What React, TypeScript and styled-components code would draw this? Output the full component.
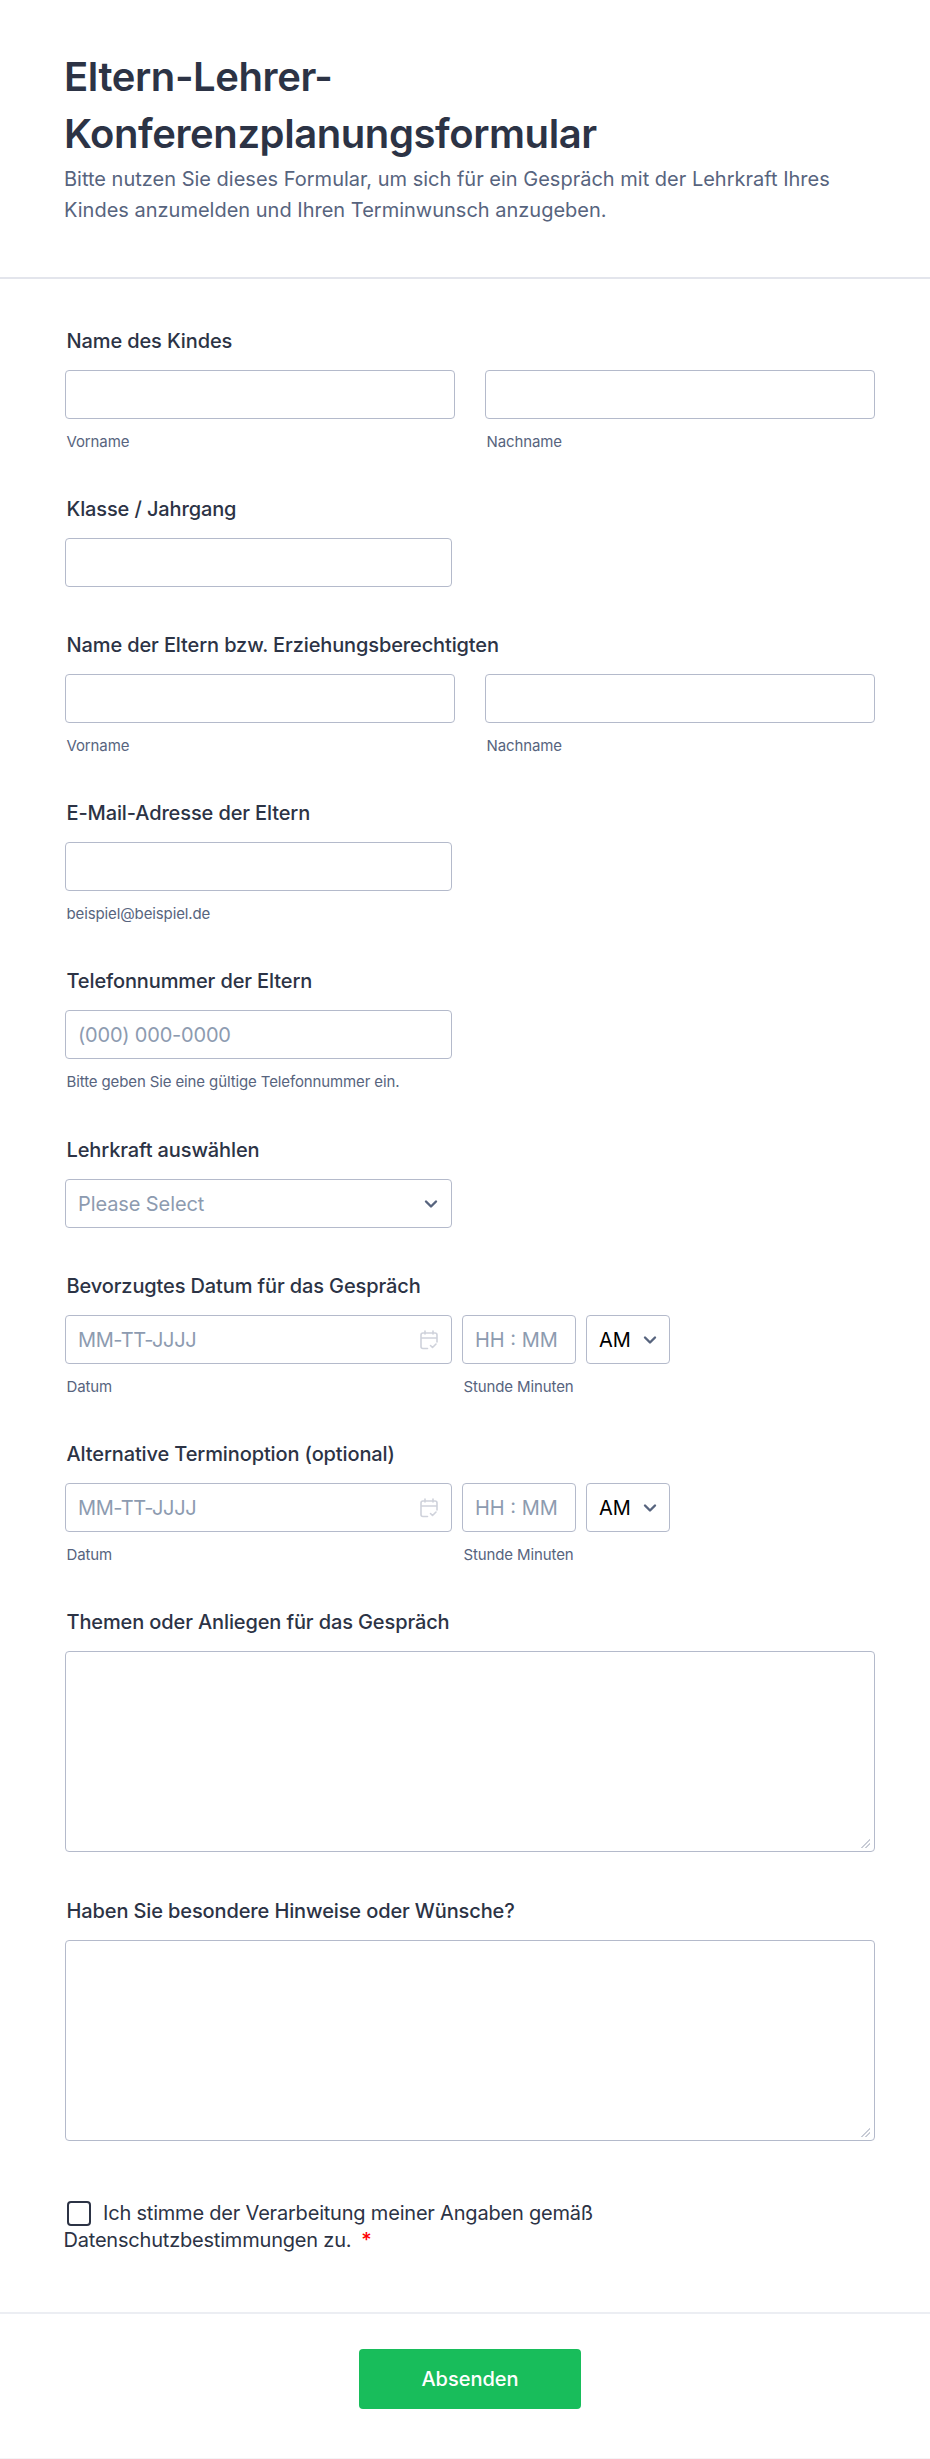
import React from 'react'
import styled, { createGlobalStyle } from 'styled-components'

const GlobalStyle = createGlobalStyle`
  html, body {
    margin: 0;
    padding: 0;
    background: #fff;
  }
  body {
    font-family: Inter, "Liberation Sans", sans-serif;
    color: #2c3345;
  }
  * {
    box-sizing: border-box;
  }
`

const Page = styled.div`
  width: 930px;
  height: 2459px;
  background: #fff;
  overflow: hidden;
  border-bottom: 1px solid #f3f4f7;
`

const Header = styled.header`
  height: 279px;
  padding: 48px 65px 0 64px;
  border-bottom: 2px solid #e3e5ec;
`

const Title = styled.h1`
  margin: 0 0 2px;
  font-size: 40px;
  line-height: 57px;
  font-weight: 600;
  letter-spacing: -0.42px;
  color: #2c3345;
`

const Subtitle = styled.p`
  margin: 0;
  font-size: 20px;
  line-height: 31px;
  font-weight: 400;
  color: #57647e;
  width: 800px;
`

const Form = styled.form`
  padding: 47px 55px 0 65px;
  display: flex;
  flex-direction: column;
`

const Field = styled.section<{ $bottom?: number }>`
  margin-bottom: ${({ $bottom = 43 }) => $bottom}px;
`

const Label = styled.label`
  display: block;
  margin: 0 0 14px 1.5px;
  font-size: 20px;
  line-height: 30px;
  font-weight: 500;
  letter-spacing: -0.12px;
  color: #2c3345;
`

const Row = styled.div<{ $gap: number }>`
  display: flex;
  gap: ${({ $gap }) => $gap}px;
`

const Col = styled.div<{ $width: number }>`
  width: ${({ $width }) => $width}px;
  flex: none;
`

const TextInput = styled.input<{ $spacing?: number }>`
  display: block;
  width: 100%;
  height: 49px;
  padding: 0 12px;
  border: 1px solid #b4bacb;
  border-radius: 4px;
  background: #fff;
  outline: none;
  font-family: inherit;
  font-size: 20px;
  letter-spacing: ${({ $spacing = 0 }) => $spacing}px;
  color: #2c3345;

  &::placeholder {
    color: #8d9bb0;
    opacity: 1;
  }
`

const Sub = styled.div`
  margin: 13px 0 0 1.5px;
  font-size: 15px;
  line-height: 19px;
  font-weight: 400;
  letter-spacing: -0.12px;
  color: #57647e;
  white-space: nowrap;
`

const Control = styled.div`
  position: relative;
`

const Select = styled.select<{ $muted?: boolean }>`
  display: block;
  width: 100%;
  height: 49px;
  padding: 0 12px;
  appearance: none;
  border: 1px solid #b4bacb;
  border-radius: 4px;
  background: #fff;
  outline: none;
  font-family: inherit;
  font-size: 20px;
  letter-spacing: ${({ $muted }) => ($muted ? '-0.1px' : '0')};
  color: ${({ $muted }) => ($muted ? '#8d9bb0' : '#000')};
`

const OverIcon = styled.svg<{ $right: number }>`
  position: absolute;
  right: ${({ $right }) => $right}px;
  top: 50%;
  transform: translateY(-50%);
  pointer-events: none;
`

const Area = styled.textarea`
  display: block;
  width: 810px;
  height: 201px;
  padding: 8px 12px;
  border: 1px solid #b4bacb;
  border-radius: 4px;
  background: #fff;
  outline: none;
  resize: vertical;
  font-family: inherit;
  font-size: 18px;

  &::-webkit-resizer {
    background: linear-gradient(
        135deg,
        transparent 46%,
        #c8ccd6 46%,
        #c8ccd6 56%,
        transparent 56%,
        transparent 68%,
        #c8ccd6 68%,
        #c8ccd6 78%,
        transparent 78%
      )
      right 4px bottom 3px / 9px 9px no-repeat;
  }
`

const Consent = styled.div`
  margin: 16px 0 0 -1.5px;
  width: 640px;
  font-size: 20px;
  line-height: 27px;
  letter-spacing: -0.2px;
  color: #2c3345;
`

const Box = styled.input`
  appearance: none;
  display: inline-block;
  width: 24px;
  height: 25px;
  margin: 0 12px 0 3.5px;
  vertical-align: -6px;
  border: 2px solid #2c3345;
  border-radius: 4px;
  background: #fff;
`

const Star = styled.span`
  margin-left: 10px;
  color: #ff0000;
  font-weight: 500;
`

const Footer = styled.footer`
  margin-top: 58px;
  border-top: 2px solid #eceef3;
  padding: 35px 55px 0 65px;
  display: flex;
  justify-content: center;
`

const Submit = styled.button`
  width: 222px;
  height: 60px;
  border: none;
  border-radius: 4px;
  background: #18bd5b;
  color: #fff;
  font-family: inherit;
  font-size: 20px;
  font-weight: 500;
`

const Chevron = ({ right }: { right: number }) => (
  <OverIcon $right={right} width="14" height="9" viewBox="0 0 14 9" fill="none">
    <path d="M2 2l5 5 5-5" stroke="#57647e" strokeWidth="2.4" strokeLinecap="round" strokeLinejoin="round" />
  </OverIcon>
)

const CalendarIcon = () => (
  <OverIcon $right={14} width="18" height="20" viewBox="0 0 18 20" fill="none">
    <path
      d="M5 1v3M13 1v3M7.5 18.5H3a2 2 0 0 1-2-2V5a2 2 0 0 1 2-2h12a2 2 0 0 1 2 2v7M1 8h16"
      stroke="#cfd2db"
      strokeWidth="1.6"
      strokeLinecap="round"
    />
    <path d="M10.5 15.5l2 2 3.5-3.5" stroke="#cfd2db" strokeWidth="1.6" strokeLinecap="round" strokeLinejoin="round" />
  </OverIcon>
)

const NameField = ({ label }: { label: string }) => (
  <Field>
    <Label>{label}</Label>
    <Row $gap={30}>
      <Col $width={390}>
        <TextInput />
        <Sub>Vorname</Sub>
      </Col>
      <Col $width={390}>
        <TextInput />
        <Sub>Nachname</Sub>
      </Col>
    </Row>
  </Field>
)

const DateField = ({ label }: { label: string }) => (
  <Field>
    <Label>{label}</Label>
    <Row $gap={10}>
      <Col $width={387}>
        <Control>
          <TextInput placeholder="MM-TT-JJJJ" $spacing={-0.4} />
          <CalendarIcon />
        </Control>
        <Sub>Datum</Sub>
      </Col>
      <Col $width={114}>
        <TextInput placeholder="HH : MM" />
        <Sub>Stunde Minuten</Sub>
      </Col>
      <Col $width={84}>
        <Control>
          <Select defaultValue="AM">
            <option>AM</option>
            <option>PM</option>
          </Select>
          <Chevron right={13} />
        </Control>
      </Col>
    </Row>
  </Field>
)

export default function App() {
  return (
    <Page>
      <GlobalStyle />
      <Header>
        <Title>
          Eltern-Lehrer-
          <br />
          Konferenzplanungsformular
        </Title>
        <Subtitle>
          Bitte nutzen Sie dieses Formular, um sich für ein Gespräch mit der Lehrkraft Ihres Kindes anzumelden und Ihren
          Terminwunsch anzugeben.
        </Subtitle>
      </Header>
      <Form>
        <NameField label="Name des Kindes" />
        <Field>
          <Label>Klasse / Jahrgang</Label>
          <Col $width={387}>
            <TextInput />
          </Col>
        </Field>
        <NameField label="Name der Eltern bzw. Erziehungsberechtigten" />
        <Field>
          <Label>E-Mail-Adresse der Eltern</Label>
          <Col $width={387}>
            <TextInput />
            <Sub>beispiel@beispiel.de</Sub>
          </Col>
        </Field>
        <Field $bottom={44}>
          <Label>Telefonnummer der Eltern</Label>
          <Col $width={387}>
            <TextInput placeholder="(000) 000-0000" $spacing={-0.2} />
            <Sub>Bitte geben Sie eine gültige Telefonnummer ein.</Sub>
          </Col>
        </Field>
        <Field>
          <Label>Lehrkraft auswählen</Label>
          <Col $width={387}>
            <Control>
              <Select $muted defaultValue="">
                <option value="">Please Select</option>
              </Select>
              <Chevron right={14} />
            </Control>
          </Col>
        </Field>
        <DateField label="Bevorzugtes Datum für das Gespräch" />
        <DateField label="Alternative Terminoption (optional)" />
        <Field $bottom={44}>
          <Label>Themen oder Anliegen für das Gespräch</Label>
          <Area />
        </Field>
        <Field>
          <Label>Haben Sie besondere Hinweise oder Wünsche?</Label>
          <Area />
        </Field>
        <Consent>
          <Box type="checkbox" />
          Ich stimme der Verarbeitung meiner Angaben gemäß Datenschutzbestimmungen zu.
          <Star>*</Star>
        </Consent>
      </Form>
      <Footer>
        <Submit type="button">Absenden</Submit>
      </Footer>
    </Page>
  )
}
